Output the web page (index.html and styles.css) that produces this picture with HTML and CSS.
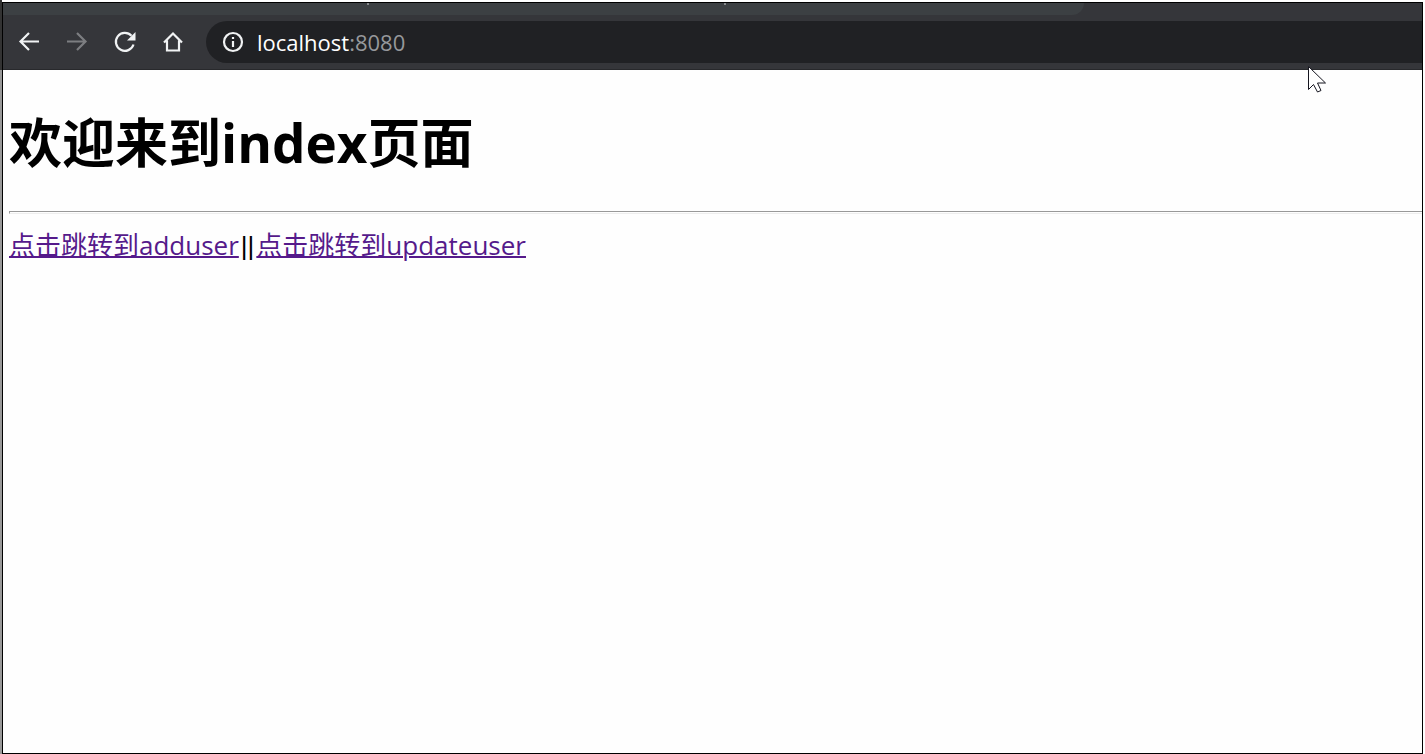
FILE: index.html
```html
<!DOCTYPE html>
<html lang="zh-CN">
<head>
<meta charset="utf-8">
<title>index</title>
<link rel="stylesheet" href="styles.css">
</head>
<body>
<div class="window">
  <header class="chrome">
    <div class="tabstrip"><span class="tick"></span><span class="tick"></span></div>
    <nav class="toolbar">
      <button class="tool" type="button" aria-label="Back">
        <svg width="24" height="24" viewBox="0 0 24 24"><path d="M22 11.500H4M12 3L3.500 11.500l8.500 8.500"/></svg>
      </button>
      <button class="tool tool-off" type="button" aria-label="Forward" disabled>
        <svg width="24" height="24" viewBox="0 0 24 24"><path d="M2 11.500h18M12 3l8.500 8.500-8.500 8.500"/></svg>
      </button>
      <button class="tool" type="button" aria-label="Reload">
        <svg width="24" height="24" viewBox="0 0 24 24"><path d="M20.500 14.500A9 9 0 1 1 18.500 5.700"/><path class="solid" d="M22.500 2v8.500h-8.500z"/></svg>
      </button>
      <button class="tool" type="button" aria-label="Home">
        <svg width="24" height="24" viewBox="0 0 24 24"><path d="M3 12.500l9-9 9 9M6 10.500V20.500h12V10.500"/></svg>
      </button>
      <div class="omnibox">
        <button class="info" type="button" aria-label="Site information">
          <svg width="24" height="24" viewBox="0 0 24 24"><circle cx="12" cy="12" r="9"/><path d="M12 11v6M12 7v2"/></svg>
        </button>
        <div class="url" role="textbox" contenteditable="true" spellcheck="false" aria-label="Address">localhost<span class="port">:8080</span></div>
      </div>
    </nav>
  </header>
  <main class="page">
    <h1 class="title">欢迎来到index页面</h1>
    <hr class="rule">
    <div class="links"><a class="link" href="#adduser">点击跳转到adduser</a><span class="divider">||</span><a class="link" href="#updateuser">点击跳转到updateuser</a></div>
  </main>
</div>
<svg class="cursor" width="20" height="28" viewBox="0 0 20 28" aria-hidden="true"><path d="M1.500 1.500v23l5-5 4 7.500 3.500-1.500-3.500-7.500h8z"/></svg>
</body>
</html>
```
FILE: styles.css
```css
* { box-sizing: border-box; }

body {
  display: flex;
  min-height: 100vh;
  margin: 0;
  padding: 2px 2px 0;
  background: linear-gradient(to right, #333 2px, transparent 2px) 0 0 / 100% 70px no-repeat,
    linear-gradient(to right, #999 2px, #fff 2px);
  font-family: "Open Sans", "Noto Sans CJK SC", sans-serif;
}

.window {
  flex: 1;
  display: flex;
  flex-direction: column;
  border: 1px solid #000;
  background: #fefefe;
}

.chrome {
  background: #35363a;
  border-bottom: 1px solid #28292c;
}

.tabstrip {
  display: flex;
  justify-content: space-between;
  width: 76.2%;
  height: 12px;
  padding: 0 358px 0 364px;
  background: #3c4043;
  border-bottom-right-radius: 12px;
}

.tick {
  width: 2px;
  height: 2px;
  background: #85888b;
}

.toolbar {
  display: flex;
  align-items: center;
  padding: 6px 0 6px 14px;
}

button {
  display: flex;
  padding: 0;
  border: 0;
  background: none;
  color: #f1f3f4;
}

.tool { margin-right: 24px; }
.tool-off { color: #7d7e81; }

.tool svg,
.info svg {
  fill: none;
  stroke: currentColor;
  stroke-width: 2.200;
}

.tool .solid {
  fill: currentColor;
  stroke: none;
}

.omnibox {
  flex: 1;
  display: flex;
  align-items: center;
  gap: 12px;
  height: 42px;
  margin-left: -3px;
  padding-left: 15px;
  border-radius: 21px 0 0 21px;
  background: #202124;
}

.url {
  flex: 1;
  color: #fff;
  font-size: 22px;
  line-height: 28px;
  outline: 0;
}

.port { color: #96989b; }

.page { padding: 0 0 0 6px; }

.title {
  margin: 37px 0 32px;
  font-size: 53px;
  line-height: 72px;
}

.rule {
  height: 3px;
  margin: 0;
  border: 1px solid #eee;
  border-top-color: #999;
  border-left-color: #999;
  border-right: 0;
}

.links {
  margin-top: 12px;
  font-size: 26px;
  line-height: 38px;
}

.link {
  color: #551a8b;
  text-decoration-thickness: 2px;
}

.divider {
  padding: 0 2px;
  font-family: "Liberation Sans", Arial, sans-serif;
}

.cursor {
  position: absolute;
  top: 65px;
  left: 1307px;
  fill: #fff;
  stroke: #15151f;
}
```
